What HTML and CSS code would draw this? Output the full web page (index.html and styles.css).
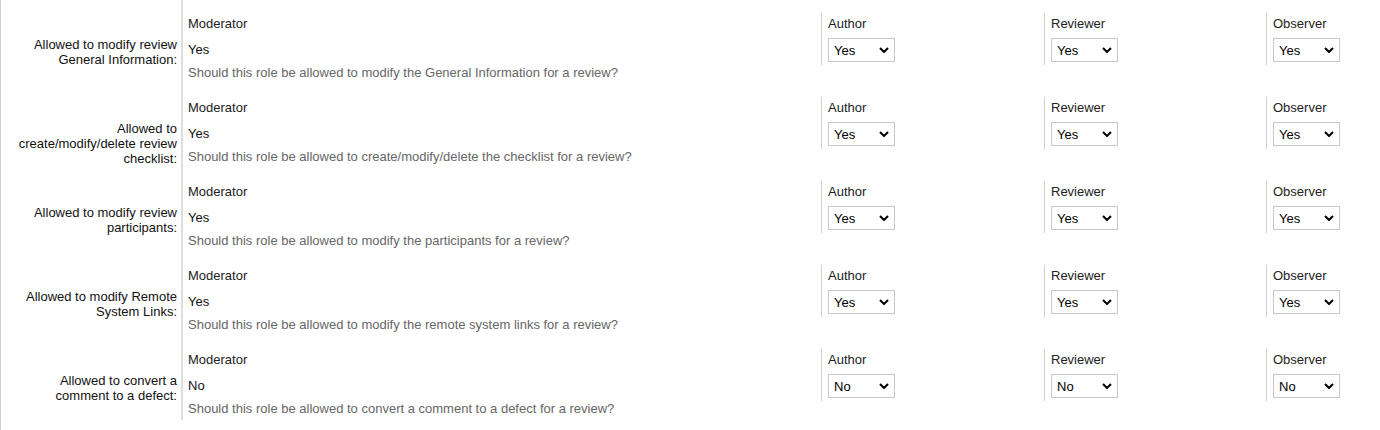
FILE: index.html
```html
<!DOCTYPE html>
<html>
<head>
<meta charset="utf-8">
<link rel="stylesheet" href="styles.css">
</head>
<body>
<div class="page">
  <div class="row">
    <div class="label">Allowed to modify review General Information:</div>
    <div class="main">
      <div class="top">
        <div class="mod"><div class="head">Moderator</div><div class="val">Yes</div></div>
        <div class="role"><div class="head">Author</div><div class="sel"><select><option>Yes</option><option>No</option></select><svg viewBox="0 0 10 6" width="10" height="6"><path d="M1 1l4 4 4-4" fill="none" stroke="#000" stroke-width="2"/></svg></div></div>
        <div class="role"><div class="head">Reviewer</div><div class="sel"><select><option>Yes</option><option>No</option></select><svg viewBox="0 0 10 6" width="10" height="6"><path d="M1 1l4 4 4-4" fill="none" stroke="#000" stroke-width="2"/></svg></div></div>
        <div class="role"><div class="head">Observer</div><div class="sel"><select><option>Yes</option><option>No</option></select><svg viewBox="0 0 10 6" width="10" height="6"><path d="M1 1l4 4 4-4" fill="none" stroke="#000" stroke-width="2"/></svg></div></div>
      </div>
      <div class="desc">Should this role be allowed to modify the General Information for a review?</div>
    </div>
  </div>
  <div class="row">
    <div class="label">Allowed to create/modify/delete review checklist:</div>
    <div class="main">
      <div class="top">
        <div class="mod"><div class="head">Moderator</div><div class="val">Yes</div></div>
        <div class="role"><div class="head">Author</div><div class="sel"><select><option>Yes</option><option>No</option></select><svg viewBox="0 0 10 6" width="10" height="6"><path d="M1 1l4 4 4-4" fill="none" stroke="#000" stroke-width="2"/></svg></div></div>
        <div class="role"><div class="head">Reviewer</div><div class="sel"><select><option>Yes</option><option>No</option></select><svg viewBox="0 0 10 6" width="10" height="6"><path d="M1 1l4 4 4-4" fill="none" stroke="#000" stroke-width="2"/></svg></div></div>
        <div class="role"><div class="head">Observer</div><div class="sel"><select><option>Yes</option><option>No</option></select><svg viewBox="0 0 10 6" width="10" height="6"><path d="M1 1l4 4 4-4" fill="none" stroke="#000" stroke-width="2"/></svg></div></div>
      </div>
      <div class="desc">Should this role be allowed to create/modify/delete the checklist for a review?</div>
    </div>
  </div>
  <div class="row">
    <div class="label">Allowed to modify review participants:</div>
    <div class="main">
      <div class="top">
        <div class="mod"><div class="head">Moderator</div><div class="val">Yes</div></div>
        <div class="role"><div class="head">Author</div><div class="sel"><select><option>Yes</option><option>No</option></select><svg viewBox="0 0 10 6" width="10" height="6"><path d="M1 1l4 4 4-4" fill="none" stroke="#000" stroke-width="2"/></svg></div></div>
        <div class="role"><div class="head">Reviewer</div><div class="sel"><select><option>Yes</option><option>No</option></select><svg viewBox="0 0 10 6" width="10" height="6"><path d="M1 1l4 4 4-4" fill="none" stroke="#000" stroke-width="2"/></svg></div></div>
        <div class="role"><div class="head">Observer</div><div class="sel"><select><option>Yes</option><option>No</option></select><svg viewBox="0 0 10 6" width="10" height="6"><path d="M1 1l4 4 4-4" fill="none" stroke="#000" stroke-width="2"/></svg></div></div>
      </div>
      <div class="desc">Should this role be allowed to modify the participants for a review?</div>
    </div>
  </div>
  <div class="row">
    <div class="label">Allowed to modify Remote System Links:</div>
    <div class="main">
      <div class="top">
        <div class="mod"><div class="head">Moderator</div><div class="val">Yes</div></div>
        <div class="role"><div class="head">Author</div><div class="sel"><select><option>Yes</option><option>No</option></select><svg viewBox="0 0 10 6" width="10" height="6"><path d="M1 1l4 4 4-4" fill="none" stroke="#000" stroke-width="2"/></svg></div></div>
        <div class="role"><div class="head">Reviewer</div><div class="sel"><select><option>Yes</option><option>No</option></select><svg viewBox="0 0 10 6" width="10" height="6"><path d="M1 1l4 4 4-4" fill="none" stroke="#000" stroke-width="2"/></svg></div></div>
        <div class="role"><div class="head">Observer</div><div class="sel"><select><option>Yes</option><option>No</option></select><svg viewBox="0 0 10 6" width="10" height="6"><path d="M1 1l4 4 4-4" fill="none" stroke="#000" stroke-width="2"/></svg></div></div>
      </div>
      <div class="desc">Should this role be allowed to modify the remote system links for a review?</div>
    </div>
  </div>
  <div class="row">
    <div class="label">Allowed to convert a comment to a defect:</div>
    <div class="main">
      <div class="top">
        <div class="mod"><div class="head">Moderator</div><div class="val">No</div></div>
        <div class="role"><div class="head">Author</div><div class="sel"><select><option>No</option><option>Yes</option></select><svg viewBox="0 0 10 6" width="10" height="6"><path d="M1 1l4 4 4-4" fill="none" stroke="#000" stroke-width="2"/></svg></div></div>
        <div class="role"><div class="head">Reviewer</div><div class="sel"><select><option>No</option><option>Yes</option></select><svg viewBox="0 0 10 6" width="10" height="6"><path d="M1 1l4 4 4-4" fill="none" stroke="#000" stroke-width="2"/></svg></div></div>
        <div class="role"><div class="head">Observer</div><div class="sel"><select><option>No</option><option>Yes</option></select><svg viewBox="0 0 10 6" width="10" height="6"><path d="M1 1l4 4 4-4" fill="none" stroke="#000" stroke-width="2"/></svg></div></div>
      </div>
      <div class="desc">Should this role be allowed to convert a comment to a defect for a review?</div>
    </div>
  </div>
</div>
</body>
</html>
```
FILE: styles.css
```css
html, body {
  margin: 0;
  padding: 0;
  background: #fff;
}
body {
  font-family: "Liberation Sans", Arial, sans-serif;
  font-size: 13px;
  line-height: 15px;
  color: #222;
}
.page {
  border-left: 1px solid #cfcfcf;
  min-height: 430px;
  box-sizing: border-box;
}
.row {
  display: flex;
}
.label {
  width: 180px;
  box-sizing: border-box;
  padding: 37px 4px 0 12px;
  text-align: right;
  color: #111;
}
.main {
  flex: 1;
  border-left: 2px solid #ddd;
  padding: 13px 0 4px 5px;
}
.top {
  display: grid;
  grid-template-columns: 1fr 223px 222px 114px;
}
.mod {
  padding-top: 3px;
}
.head {
  color: #222;
}
.val {
  margin-top: 11px;
  color: #111;
}
.role {
  border-left: 1px solid #cfcfcf;
  padding: 3px 0 3px 6px;
}
.sel {
  position: relative;
  margin-top: 7px;
  width: 67px;
  height: 24px;
}
.sel select {
  appearance: none;
  -webkit-appearance: none;
  width: 67px;
  height: 24px;
  box-sizing: border-box;
  border: 1px solid #c8c8c8;
  border-radius: 0;
  background: #fff;
  padding: 0 0 0 5px;
  margin: 0;
  font-family: "Liberation Sans", Arial, sans-serif;
  font-size: 13px;
  color: #000;
}
.sel svg {
  position: absolute;
  right: 6px;
  top: 9px;
  pointer-events: none;
}
.desc {
  color: #666;
}
```
